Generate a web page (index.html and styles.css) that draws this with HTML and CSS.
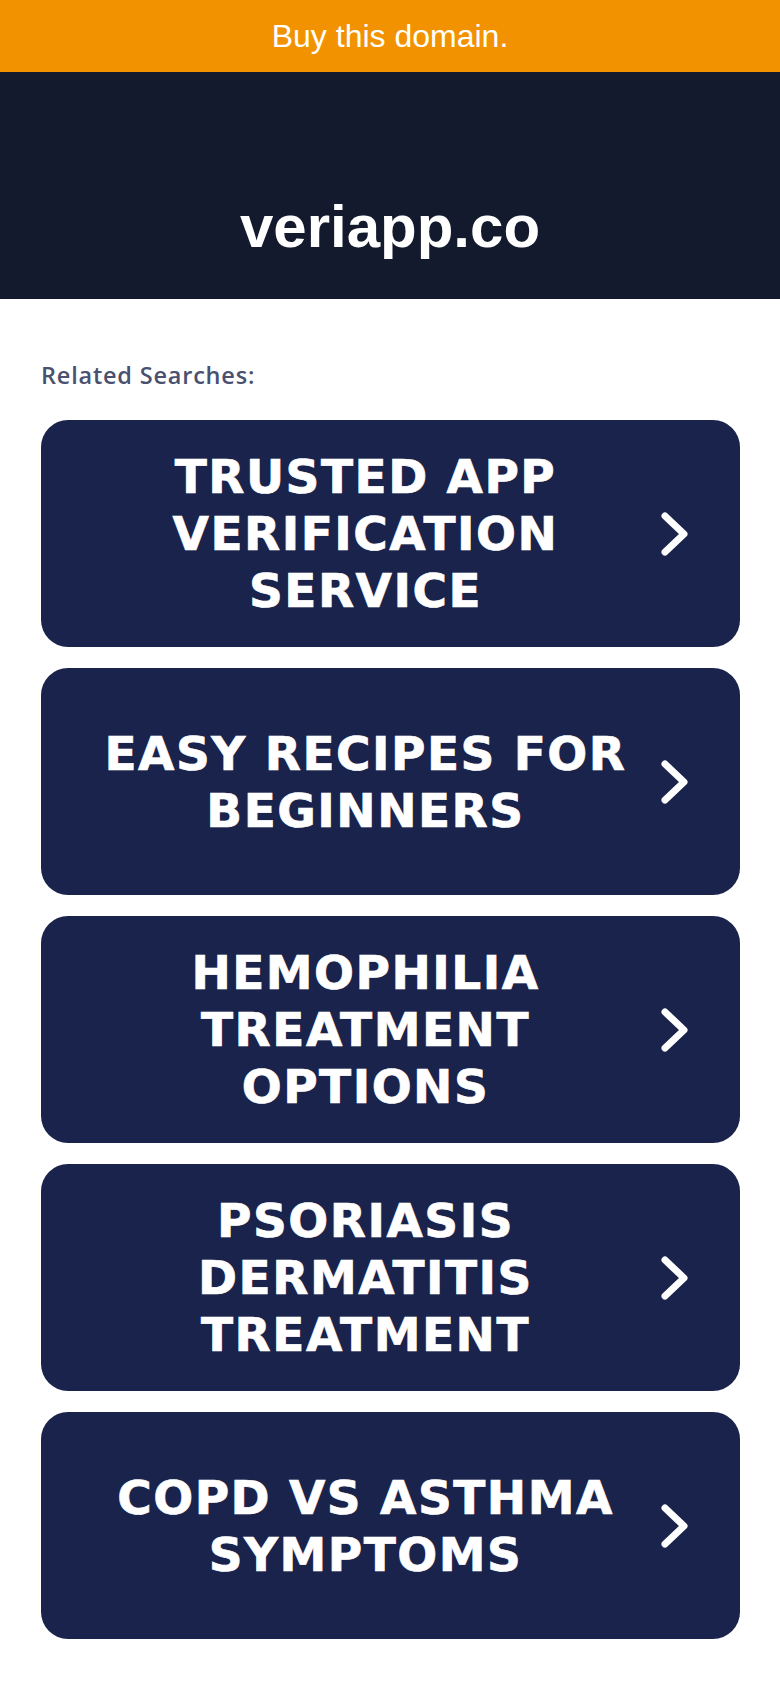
FILE: index.html
```html
<!DOCTYPE html>
<html lang="en">
<head>
<meta charset="utf-8">
<title>veriapp.co</title>
<link rel="stylesheet" href="styles.css">
</head>
<body>
<div class="buybar">Buy this domain.</div>
<header class="hero"><h1 class="domain">veriapp.co</h1></header>
<main class="content">
  <p class="label">Related Searches:</p>
  <ul class="links">
    <li><a class="card" href="#"><span class="card-text">TRUSTED APP VERIFICATION SERVICE</span><svg class="chev" viewBox="0 0 34 50"><path d="M8 7 L27 25 L8 43"/></svg></a></li>
    <li><a class="card" href="#"><span class="card-text">EASY RECIPES FOR BEGINNERS</span><svg class="chev" viewBox="0 0 34 50"><path d="M8 7 L27 25 L8 43"/></svg></a></li>
    <li><a class="card" href="#"><span class="card-text">HEMOPHILIA TREATMENT OPTIONS</span><svg class="chev" viewBox="0 0 34 50"><path d="M8 7 L27 25 L8 43"/></svg></a></li>
    <li><a class="card" href="#"><span class="card-text">PSORIASIS DERMATITIS TREATMENT</span><svg class="chev" viewBox="0 0 34 50"><path d="M8 7 L27 25 L8 43"/></svg></a></li>
    <li><a class="card" href="#"><span class="card-text">COPD VS ASTHMA SYMPTOMS</span><svg class="chev" viewBox="0 0 34 50"><path d="M8 7 L27 25 L8 43"/></svg></a></li>
  </ul>
</main>
</body>
</html>
```

FILE: styles.css
```css
html, body {
  margin: 0;
  padding: 0;
  background: #ffffff;
}
body {
  font-family: "Liberation Sans", Arial, sans-serif;
}
.buybar {
  height: 72px;
  background: #f39200;
  color: #ffffff;
  font-size: 32px;
  display: flex;
  align-items: center;
  justify-content: center;
}
.hero {
  background: #131a2e;
  height: 227px;
  box-sizing: border-box;
  padding-top: 120px;
}
.domain {
  margin: 0;
  color: #ffffff;
  text-align: center;
  font-family: "Liberation Sans", Arial, sans-serif;
  font-weight: 700;
  font-size: 60px;
  line-height: 69px;
}
.content {
  padding: 62px 40px 0 41px;
}
.label {
  margin: 0 0 31px;
  font-family: "Open Sans", sans-serif;
  font-weight: 600;
  font-size: 23.5px;
  line-height: 28px;
  letter-spacing: 0.8px;
  color: #4a5170;
}
.links {
  list-style: none;
  margin: 0;
  padding: 0;
  display: flex;
  flex-direction: column;
  gap: 21px;
}
.card {
  display: flex;
  align-items: center;
  height: 227px;
  box-sizing: border-box;
  padding: 0 49px 0 50px;
  background: #1a234b;
  border-radius: 27px;
  text-decoration: none;
}
.card-text {
  flex: 1;
  text-align: center;
  color: #ffffff;
  font-family: "DejaVu Sans", Verdana, sans-serif;
  font-weight: 700;
  font-size: 47px;
  line-height: 57px;
  letter-spacing: 1.5px;
  -webkit-text-stroke: 0.7px #ffffff;
}
.chev {
  width: 34px;
  height: 50px;
  flex: none;
  margin-left: 17px;
}
.chev path {
  fill: none;
  stroke: #ffffff;
  stroke-width: 7;
  stroke-linecap: round;
  stroke-linejoin: round;
}
```
